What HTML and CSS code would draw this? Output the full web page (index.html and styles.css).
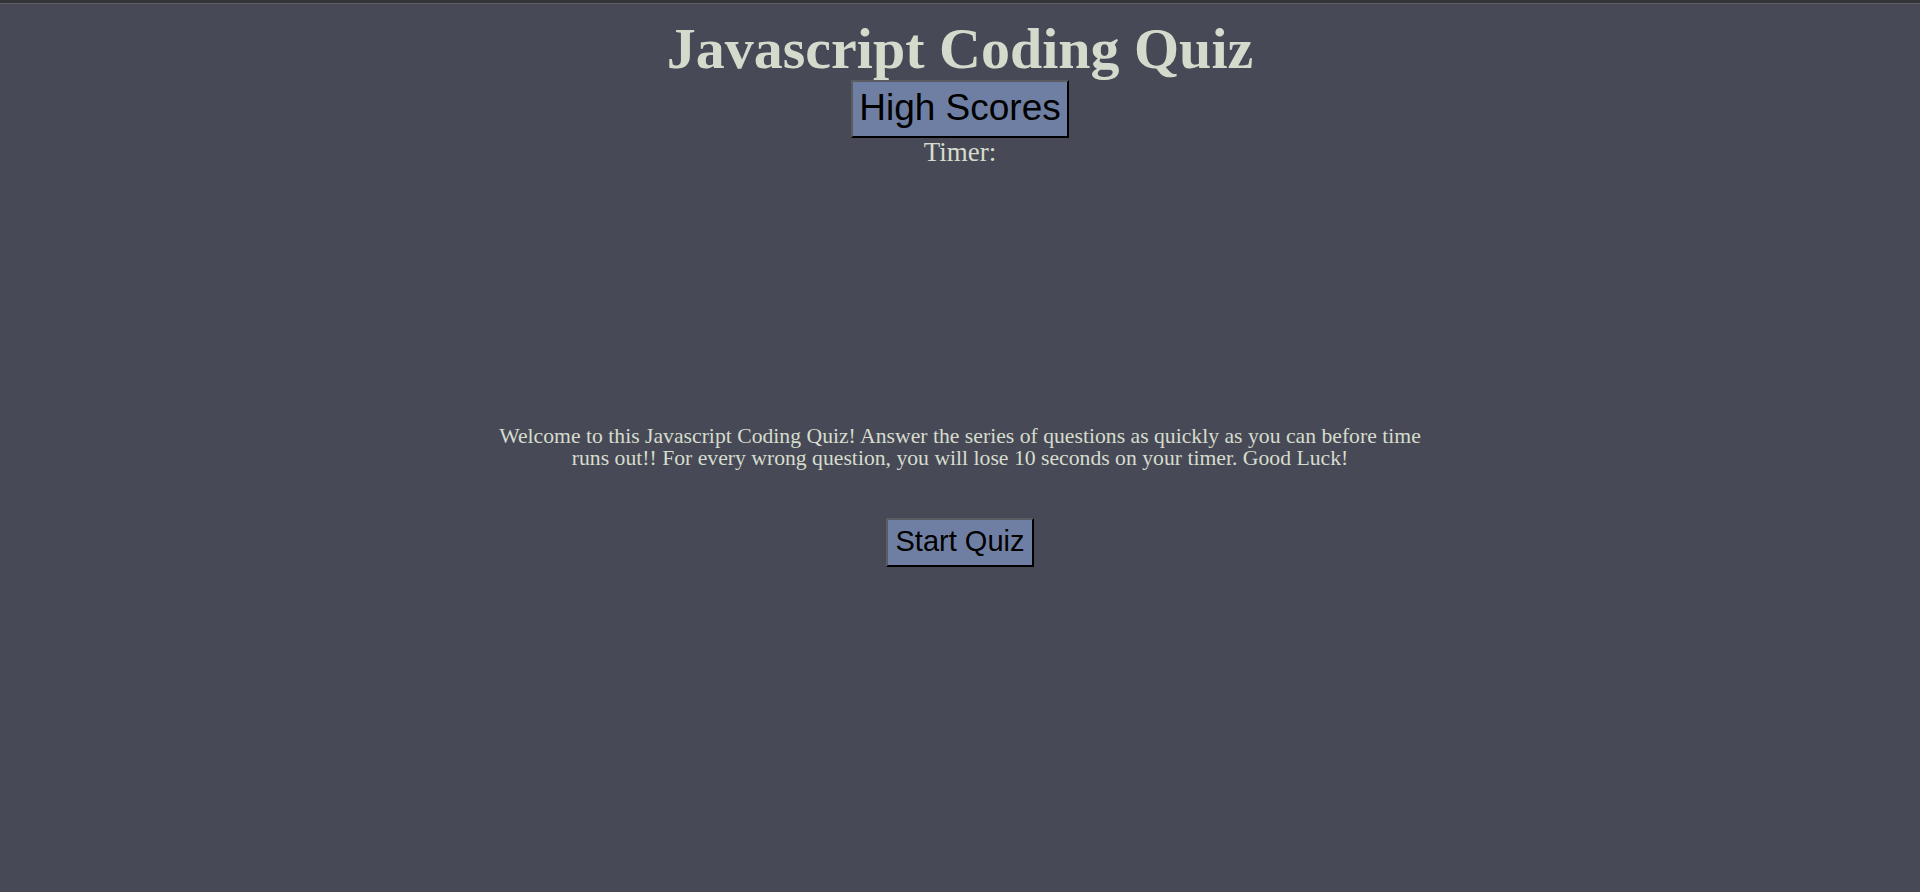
FILE: index.html
```html
<!DOCTYPE html>
<html lang="en">
<head>
<meta charset="utf-8">
<title>Javascript Coding Quiz</title>
<link rel="stylesheet" href="styles.css">
</head>
<body>
<div class="topbar"></div>
<header class="header">
  <h1 class="title">Javascript Coding Quiz</h1>
  <button class="btn btn-scores">High Scores</button>
  <p class="timer">Timer:</p>
</header>
<main class="intro">
  <p class="welcome">Welcome to this Javascript Coding Quiz! Answer the series of questions as quickly as you can before time runs out!! For every wrong question, you will lose 10 seconds on your timer. Good Luck!</p>
  <button class="btn btn-start">Start Quiz</button>
</main>
</body>
</html>
```

FILE: styles.css
```css
html, body {
  margin: 0;
  padding: 0;
  background: #474a56;
  height: 100%;
}

body {
  font-family: "Liberation Serif", "Times New Roman", serif;
  color: #d6dccd;
  overflow: hidden;
}

.topbar {
  height: 3px;
  background: #333438;
  border-bottom: 1px solid #5c5e63;
}

.header {
  display: flex;
  flex-direction: column;
  align-items: center;
}

.title {
  margin: 16px 0 0;
  font-size: 58px;
  line-height: 58px;
  font-weight: bold;
  color: #d5dbcc;
}

.btn {
  font-family: "Liberation Sans", Arial, sans-serif;
  color: #000;
  background: #6f7fa3;
  border-style: solid;
  border-width: 2px;
  border-color: #5a5c62 #000 #000 #5a5c62;
  line-height: 1.15;
  cursor: pointer;
}

.btn-scores {
  margin-top: 2px;
  font-size: 37px;
  padding: 5px 6px 6px;
}

.timer {
  margin: 0;
  font-size: 27px;
  line-height: 29px;
}

.intro {
  display: flex;
  flex-direction: column;
  align-items: center;
  padding-top: 258px;
}

.welcome {
  margin: 0;
  width: 945px;
  text-align: center;
  font-size: 21.7px;
  line-height: 22px;
}

.btn-start {
  margin-top: 49px;
  font-size: 29px;
  padding: 5px 8px 7px;
}
```
